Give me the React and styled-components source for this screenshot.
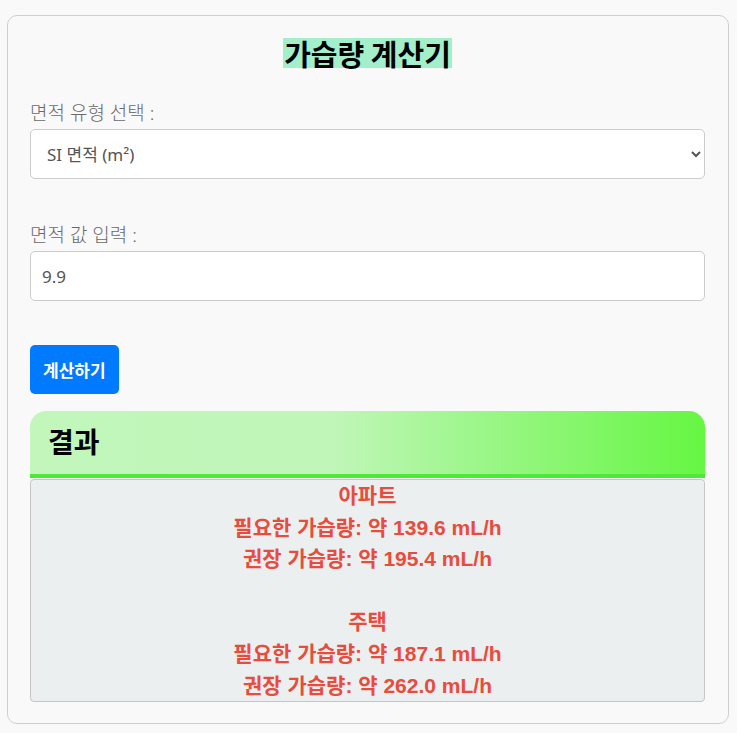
import React, { useState } from 'react'
import styled, { createGlobalStyle } from 'styled-components'

const GlobalStyle = createGlobalStyle`
  html, body {
    margin: 0;
    padding: 0;
    background: #f9f9f9;
  }
  body {
    font-family: "Noto Sans", "Noto Sans CJK KR", sans-serif;
  }
  * { box-sizing: border-box; }
`

const Card = styled.div`
  margin: 15px 8px 9px 7px;
  padding: 22px 23px 21px 22px;
  background: #f9f9f9;
  border: 1px solid #cfcfcf;
  border-radius: 10px;
`

const Title = styled.h1`
  margin: 0 0 33px;
  text-align: center;
  line-height: 30px;
  font-size: 29px;
  font-weight: 700;
  font-family: "Noto Sans CJK KR", sans-serif;
  color: #000;
`

const Highlight = styled.span`
  display: inline-block;
  background: #a3efc9;
  line-height: 30px;
  padding: 0 1px;
`

const Group = styled.div`
  margin-bottom: 44px;
`

const Label = styled.label`
  display: block;
  font-size: 19px;
  line-height: 25px;
  color: #6a6a6a;
  margin-bottom: 3px;
  font-family: "Noto Sans", "Noto Sans CJK KR", sans-serif;
  font-weight: 300;
`

const fieldCss = `
  display: block;
  width: 100%;
  height: 50px;
  padding: 0 16px;
  font-size: 17px;
  color: #555;
  background-color: #fff;
  border: 1px solid #ccc;
  border-radius: 5px;
  font-family: "Noto Sans", "Noto Sans CJK KR", sans-serif;
  outline: none;
`

const Select = styled.select`
  ${fieldCss}
  padding-left: 12px;
`

const Input = styled.input`
  ${fieldCss}
  padding-left: 11px;
`

const Button = styled.button`
  display: block;
  height: 49px;
  padding: 0 13px;
  background: #007bff;
  color: #fff;
  border: none;
  border-radius: 5px;
  font-size: 17px;
  font-weight: 700;
  font-family: "Noto Sans CJK KR", sans-serif;
  margin-bottom: 17px;
  cursor: pointer;
`

const ResultHead = styled.div`
  height: 67px;
  display: flex;
  align-items: center;
  padding: 0 18px 4px;
  border-radius: 16px 16px 0 0;
  background: linear-gradient(to right, #c2f6bb 0%, #c0f6b8 45%, #66f643 100%);
  border-bottom: 4px solid #4ee83a;
  margin-bottom: 1px;
  font-size: 28px;
  font-weight: 700;
  font-family: "Noto Sans CJK KR", sans-serif;
  color: #000;
`

const ResultBox = styled.div`
  background: #ebeff0;
  border: 1px solid #c4c7c8;
  border-radius: 4px;
  text-align: center;
  color: #e74c3c;
  font-size: 21px;
  font-weight: 700;
  line-height: 31.6px;
  font-family: "Liberation Sans", "Noto Sans CJK KR", sans-serif;
`

const Line = styled.div`
  min-height: 31.6px;
`

const results = [
  { name: '아파트', need: '139.6', rec: '195.4' },
  { name: '주택', need: '187.1', rec: '262.0' },
]

export default function App() {
  const [type, setType] = useState('si')
  const [area, setArea] = useState('9.9')

  return (
    <>
      <GlobalStyle />
      <Card>
        <Title><Highlight>가습량 계산기</Highlight></Title>
        <Group>
          <Label>면적 유형 선택 :</Label>
          <Select value={type} onChange={(e) => setType(e.target.value)}>
            <option value='si'>SI 면적 (m²)</option>
            <option value='py'>평 (坪)</option>
          </Select>
        </Group>
        <Group>
          <Label>면적 값 입력 :</Label>
          <Input type='text' value={area} onChange={(e) => setArea(e.target.value)} />
        </Group>
        <Button>계산하기</Button>
        <ResultHead>결과</ResultHead>
        <ResultBox>
          {results.map((r, i) => (
            <React.Fragment key={r.name}>
              {i > 0 && <Line />}
              <Line>{r.name}</Line>
              <Line>필요한 가습량: 약 {r.need} mL/h</Line>
              <Line>권장 가습량: 약 {r.rec} mL/h</Line>
            </React.Fragment>
          ))}
        </ResultBox>
      </Card>
    </>
  )
}
